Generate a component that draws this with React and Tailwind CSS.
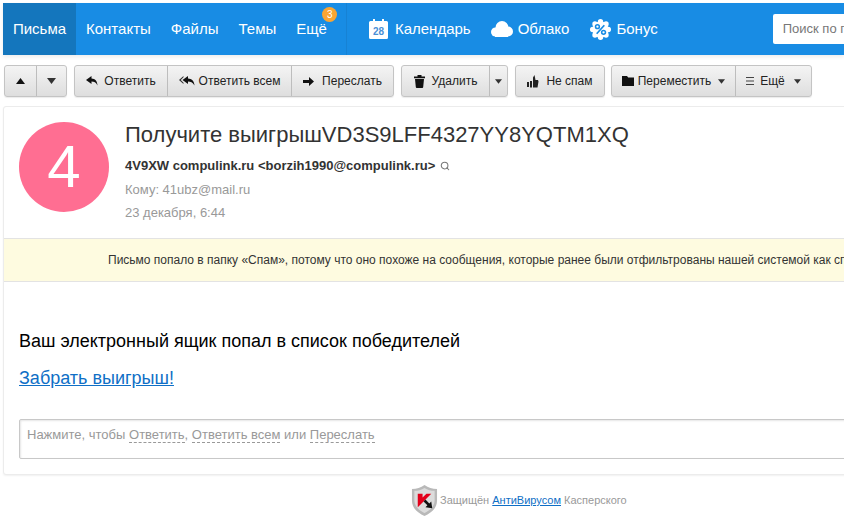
import React from 'react';
import { Search } from 'lucide-react';

// Simple toolbar triangles and glyph icons
const CaretDown = ({ className = 'w-[9px] h-[6px]' }) => (
  <svg viewBox="0 0 9 6" className={`shrink-0 ${className}`}><path d="M0 0h9L4.5 6z" fill="#333" /></svg>
);
const CaretUp = () => (
  <svg viewBox="0 0 9 6" className="w-[9px] h-[6px] shrink-0"><path d="M0 6h9L4.5 0z" fill="#111" /></svg>
);
const ReplyIcon = () => (
  <svg viewBox="0 0 12 10" className="w-[12px] h-[10px] shrink-0"><path d="M5.5 0 0 4l5.5 4V5.4c2.6 0 4.6.8 6 4.100C11.300 5 9 2.600 5.500 2.500z" fill="#111" /></svg>
);
const ReplyAllIcon = () => (
  <svg viewBox="0 0 16 10" className="w-[16px] h-[10px] shrink-0">
    <path d="M4.500 0 0 4l4.500 4V6.800L1.800 4 4.500 1.300z" fill="#333" />
    <path d="M9 0 3.500 4 9 8V5.400c2.600 0 4.600.8 6.500 4.100C15.300 5 12.500 2.600 9 2.500z" fill="#111" />
  </svg>
);
const ForwardIcon = () => (
  <svg viewBox="0 0 11 9" className="w-[11px] h-[9px] shrink-0"><path d="M6 0l5 4.500L6 9V6H0V3h6z" fill="#111" /></svg>
);
const TrashIcon = () => (
  <svg viewBox="0 0 11 13" className="w-[11px] h-[13px] shrink-0">
    <path d="M0 1.500h11V3.200H0zM3.500 0h4v1.500h-4zM1 4h9l-.8 8a1 1 0 0 1-1 1H2.800a1 1 0 0 1-1-1z" fill="#111" />
  </svg>
);
const ThumbIcon = () => (
  <svg viewBox="0 0 12 13" className="w-[12px] h-[13px] shrink-0">
    <path d="M0 7h2v5H0zM3 6h2v6.500H3zM6 2.500 7.500 0 8.500 5H11l.5 1.500-1 6H6z" fill="#222" />
  </svg>
);
const FolderIcon = () => (
  <svg viewBox="0 0 12 10" className="w-[12px] h-[10px] shrink-0"><path d="M0 0h5l1.200 1.500H12V10H0z" fill="#111" /></svg>
);
const MenuIcon = () => (
  <svg viewBox="0 0 8 8" className="w-[8px] h-[8px] shrink-0"><path d="M0 0h8v1H0zM0 3.500h8v1H0zM0 7h8v1H0z" fill="#444" /></svg>
);

const Btn = ({ children, className = '' }) => (
  <div className={`h-full flex items-center justify-center border-l border-[#bdbdbd] first:border-l-0 ${className}`}>
    {children}
  </div>
);

const Group = ({ children, className = '' }) => (
  <div className={`h-[32px] shrink-0 flex rounded-[3px] border border-[#c4c4c4] bg-gradient-to-b from-[#f4f4f4] to-[#dedede] text-[12px] text-[#222] shadow-[0_1px_1px_rgba(0,0,0,0.08)] ${className}`}>
    {children}
  </div>
);

const NavLink = ({ children, className = '' }) => (
  <span className={`shrink-0 text-[15px] text-white ${className}`}>{children}</span>
);

const App = () => {
  return (
    <div className="w-[844px] h-[525px] overflow-hidden bg-white font-['Liberation_Sans',Arial,sans-serif]">
      {/* Top bar */}
      <div className="pt-[3px] h-[55px]">
        <div className="h-[52px] ml-[3px] bg-[#188ce4] flex items-center overflow-hidden shadow-[0_2px_4px_rgba(0,0,0,0.08)]">
          <div className="w-[73px] h-full shrink-0 bg-[#1476bd] flex items-center justify-center">
            <NavLink>Письма</NavLink>
          </div>
          <NavLink className="ml-[10px]">Контакты</NavLink>
          <NavLink className="ml-[20px]">Файлы</NavLink>
          <NavLink className="ml-[20px]">Темы</NavLink>
          <div className="relative ml-[20px] shrink-0">
            <NavLink>Ещё</NavLink>
            <span className="absolute -top-[10px] left-[26px] w-[15px] h-[15px] rounded-full bg-[#f9a533] text-white text-[10px] leading-[15px] text-center">3</span>
          </div>
          <div className="ml-[19px] w-px h-full shrink-0 bg-[#1782d4]" />
          <svg viewBox="0 0 19 20" className="ml-[22px] w-[19px] h-[20px] shrink-0">
            <path d="M1.500 2H4V0h2v2h7V0h2v2h2.500A1.500 1.500 0 0 1 19 3.500V18.500A1.500 1.500 0 0 1 17.500 20h-16A1.500 1.500 0 0 1 0 18.500V3.500A1.500 1.500 0 0 1 1.500 2z" fill="#fff" />
            <text x="9.500" y="16" textAnchor="middle" fontSize="10" fontWeight="700" fill="#4a8fd6">28</text>
          </svg>
          <NavLink className="ml-[7px]">Календарь</NavLink>
          <svg viewBox="0 0 22 16" className="ml-[20px] w-[22px] h-[16px] shrink-0">
            <g fill="#fff">
              <circle cx="4.500" cy="11" r="4.500" />
              <circle cx="11" cy="6.500" r="6.500" />
              <circle cx="17" cy="10.500" r="5" />
              <rect x="4" y="10" width="13" height="6" />
            </g>
          </svg>
          <NavLink className="ml-[5px]">Облако</NavLink>
          <svg viewBox="0 0 22 22" className="ml-[21px] w-[21px] h-[21px] shrink-0">
            <g fill="#fff">
              <circle cx="11" cy="11" r="8.500" />
              <circle cx="11" cy="2.800" r="2.800" />
              <circle cx="16.800" cy="5.200" r="2.800" />
              <circle cx="19.200" cy="11" r="2.800" />
              <circle cx="16.800" cy="16.800" r="2.800" />
              <circle cx="11" cy="19.200" r="2.800" />
              <circle cx="5.200" cy="16.800" r="2.800" />
              <circle cx="2.800" cy="11" r="2.800" />
              <circle cx="5.200" cy="5.200" r="2.800" />
            </g>
            <circle cx="7.800" cy="8" r="2" fill="none" stroke="#188ce4" strokeWidth="1.600" />
            <circle cx="14.200" cy="14" r="2" fill="none" stroke="#188ce4" strokeWidth="1.600" />
            <path d="M15 6.500 7 15.500" stroke="#188ce4" strokeWidth="1.800" />
          </svg>
          <NavLink className="ml-[5px]">Бонус</NavLink>
          <div className="ml-[115px] w-[200px] h-[30px] shrink-0 bg-white rounded-[2px] flex items-center pl-[10px] text-[13px] text-[#777] whitespace-nowrap">
            Поиск по почте
          </div>
        </div>
      </div>

      {/* Toolbar */}
      <div className="mt-[10px] ml-[4px] flex h-[32px] whitespace-nowrap">
        <Group className="w-[63px]">
          <Btn className="w-[31px]"><CaretUp /></Btn>
          <Btn className="flex-1"><CaretDown /></Btn>
        </Group>
        <Group className="ml-[7px] w-[320px]">
          <Btn className="w-[92px] gap-[6px]"><ReplyIcon />Ответить</Btn>
          <Btn className="w-[124px] gap-[4px]"><ReplyAllIcon />Ответить всем</Btn>
          <Btn className="flex-1 gap-[8px]"><ForwardIcon />Переслать</Btn>
        </Group>
        <Group className="ml-[7px] w-[107px]">
          <Btn className="w-[87px] gap-[7px]"><TrashIcon />Удалить</Btn>
          <Btn className="flex-1"><CaretDown className="w-[7px] h-[5px]" /></Btn>
        </Group>
        <Group className="ml-[7px] w-[90px]">
          <Btn className="flex-1 gap-[7px]"><ThumbIcon />Не спам</Btn>
        </Group>
        <Group className="ml-[6px] w-[201px]">
          <Btn className="w-[123px] gap-[4px]"><FolderIcon />Переместить<CaretDown className="w-[7px] h-[5px] ml-[3px]" /></Btn>
          <Btn className="flex-1 gap-[6px]"><MenuIcon />Ещё<CaretDown className="w-[7px] h-[5px] ml-[3px]" /></Btn>
        </Group>
      </div>

      {/* Letter card */}
      <div className="mt-[9px] ml-[3px] w-[900px] h-[369px] border border-[#ececec] rounded-[3px] shadow-[0_1px_2px_rgba(0,0,0,0.06)] bg-white">
        <div className="h-[131px] flex pl-[15px] pt-[15px]">
          <div className="w-[90px] h-[90px] shrink-0 rounded-full bg-[#ff6e92] flex items-center justify-center text-white text-[60px] leading-none">4</div>
          <div className="ml-[16px]">
            <div className="text-[22px] leading-[26px] text-[#333]">Получите выигрышVD3S9LFF4327YY8YQTM1XQ</div>
            <div className="mt-[11px] flex items-center text-[13px] leading-[14px] font-bold text-[#333]">
              4V9XW compulink.ru &lt;borzih1990@compulink.ru&gt;
              <Search size={10} strokeWidth={2.5} className="ml-[5px] text-[#777]" />
            </div>
            <div className="mt-[10px] text-[13px] leading-[14px] text-[#999]">Кому: 41ubz@mail.ru</div>
            <div className="mt-[9px] text-[13px] leading-[14px] text-[#999]">23 декабря, 6:44</div>
          </div>
        </div>

        {/* Spam notice */}
        <div className="h-[44px] border-y border-[#e3e3e3] bg-[#fefbe0] flex items-center pl-[104px] text-[12px] text-[#333] whitespace-nowrap">
          Письмо попало в папку «Спам», потому что оно похоже на сообщения, которые ранее были отфильтрованы нашей системой как спам.
        </div>

        {/* Letter body */}
        <div className="pl-[15px] pt-[49px]">
          <div className="text-[18px] leading-[20px] text-black">Ваш электронный ящик попал в список победителей</div>
          <a href="#" className="block mt-[17px] text-[18px] leading-[20px] text-[#0f6fc6] underline">Забрать выигрыш!</a>
          <div className="mt-[31px] h-[40px] border border-[#c8c8c8] rounded-[2px] shadow-[inset_1px_1px_2px_rgba(0,0,0,0.1)] pl-[7px] pt-[6px] text-[13px] leading-[18px] text-[#999]">
            Нажмите, чтобы{' '}
            <span className="border-b border-dashed border-[#999]">Ответить</span>,{' '}
            <span className="border-b border-dashed border-[#999]">Ответить всем</span> или{' '}
            <span className="border-b border-dashed border-[#999]">Переслать</span>
          </div>
        </div>
      </div>

      {/* Kaspersky footer */}
      <div className="mt-[10px] ml-[411px] flex items-center text-[11px] text-[#999] whitespace-nowrap">
        <svg viewBox="0 0 28 32" className="w-[27px] h-[31px] shrink-0">
          <path d="M14 0c4 3 8 4 13 4v12c0 8-6 13-13 16C7 29 1 24 1 16V4c5 0 9-1 13-4z" fill="#b9b9b9" />
          <path d="M14 3c3 2 7 3 10.500 3v10c0 6-5 10.500-10.500 13-5.500-2.500-10.500-7-10.500-13V6C7 6 11 5 14 3z" fill="#dcdcdc" />
          <path d="M7 9h5v4l4-4h5L7 23z" fill="#e3001b" />
          <path d="M13 17l2-2 4 4 2-2 1 7-7-1 2-2z" fill="#111" />
        </svg>
        <span className="ml-[2px]">Защищён <a href="#" className="text-[#0f6fc6] underline">АнтиВирусом</a> Касперского</span>
      </div>
    </div>
  );
};

export default App;
